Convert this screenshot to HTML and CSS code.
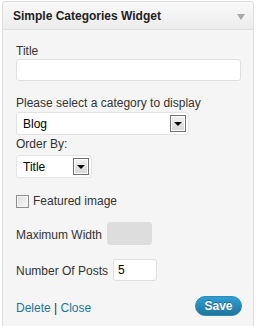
FILE: index.html
```html
<!DOCTYPE html>
<html lang="en">
<head>
  <meta charset="UTF-8" />
  <title>Simple Categories Widget</title>
  <link rel="stylesheet" href="styles.css">
</head>
<body>
  <div class="widget">
    <div class="widget-top">
      <h4>Simple Categories Widget</h4>
      <span class="toggle"></span>
    </div>
    <div class="widget-inside">
      <p class="label">Title</p>
      <div class="field wide"></div>

      <p class="label gap">Please select a category to display</p>
      <div class="select cat"><span>Blog</span><i class="drop"></i></div>

      <p class="label tight">Order By:</p>
      <div class="select order"><span>Title</span><i class="drop"></i></div>

      <label class="row check-row"><span class="checkbox"></span>Featured image</label>

      <div class="row max-row">
        <span>Maximum Width</span>
        <div class="field disabled"></div>
      </div>

      <div class="row posts-row">
        <span>Number Of Posts</span>
        <div class="field small">5</div>
      </div>

      <div class="row actions">
        <span><a href="#">Delete</a> | <a href="#">Close</a></span>
        <button class="save">Save</button>
      </div>
    </div>
  </div>
</body>
</html>
```

FILE: styles.css
```css
body { margin: 0; background: #fff; font-family: "Liberation Sans", Arial, sans-serif; font-size: 12px; line-height: 16px; color: #333; overflow: hidden; }
.widget { margin: 1px 2px 0 2px; border: 1px solid #dfdfdf; border-bottom: none; border-radius: 3px 3px 0 0; background: #f5f5f5; height: 340px; }
.widget-top {
  height: 27px;
  border-bottom: 1px solid #dfdfdf;
  background: linear-gradient(#f9f9f9, #ececec);
  display: flex;
  align-items: center;
  justify-content: space-between;
  padding: 0 8px 0 10px;
  border-radius: 3px 3px 0 0;
}
.widget-top h4 { margin: 0; font-size: 12px; font-weight: bold; color: #222; }
.toggle { width: 0; height: 0; border-left: 4px solid transparent; border-right: 4px solid transparent; border-top: 6px solid #a8a8a8; margin-top: 2px; }
.widget-inside { padding: 13px 11px 0 13px; }
.label { margin: 0; }
.label.gap { margin-top: 14px; }
.label.tight { margin-top: 1px; }
.field { box-sizing: border-box; height: 22px; background: #fff; border: 1px solid #dfdfdf; border-radius: 3px; }
.field.wide { width: 225px; }
.select {
  box-sizing: border-box;
  height: 23px;
  background: #fff;
  border: 1px solid #e3e3e3;
  border-radius: 3px;
  display: flex;
  align-items: center;
  justify-content: space-between;
  padding: 0 2px 0 6px;
  color: #000;
  margin-top: 1px;
}
.select.cat { width: 173px; }
.select.order { width: 76px; margin-top: 3px; }
.drop {
  box-sizing: border-box;
  width: 16px;
  height: 17px;
  border: 1px solid #707070;
  box-shadow: inset 0 0 0 1px #fff;
  background: linear-gradient(#f2f2f2, #d6d6d6);
  position: relative;
}
.drop::after {
  content: "";
  position: absolute;
  left: 3px;
  top: 6px;
  border-left: 4px solid transparent;
  border-right: 4px solid transparent;
  border-top: 4px solid #000;
}
.row { display: flex; align-items: center; }
.check-row { margin-top: 15px; gap: 4px; }
.checkbox {
  box-sizing: border-box;
  width: 13px;
  height: 13px;
  border: 1px solid #8f8f8f;
  box-shadow: inset 0 0 0 1px #f4f4f4;
  background: linear-gradient(135deg, #dcdcdc, #fcfcfc);
}
.max-row { margin-top: 13px; gap: 5px; }
.max-row span { margin-top: 2px; }
.field.disabled { width: 45px; height: 23px; background: #dddddd; border-color: #dddddd; }
.posts-row { margin-top: 14px; gap: 5px; }
.posts-row span { margin-top: 1px; }
.field.small { width: 44px; padding-left: 4px; color: #000; line-height: 20px; }
.actions { margin-top: 15px; justify-content: space-between; }
.actions span { margin-top: 3px; }
.actions a { color: #21759b; text-decoration: none; }
.save {
  width: 47px;
  height: 20px;
  border: 1px solid #298cba;
  border-radius: 10px;
  background: linear-gradient(#2e9fd2, #21759b);
  color: #fff;
  font-family: "Liberation Sans", Arial, sans-serif;
  font-weight: bold;
  font-size: 12px;
  padding: 0;
  text-shadow: 0 -1px 0 rgba(0, 0, 0, 0.3);
}
```
